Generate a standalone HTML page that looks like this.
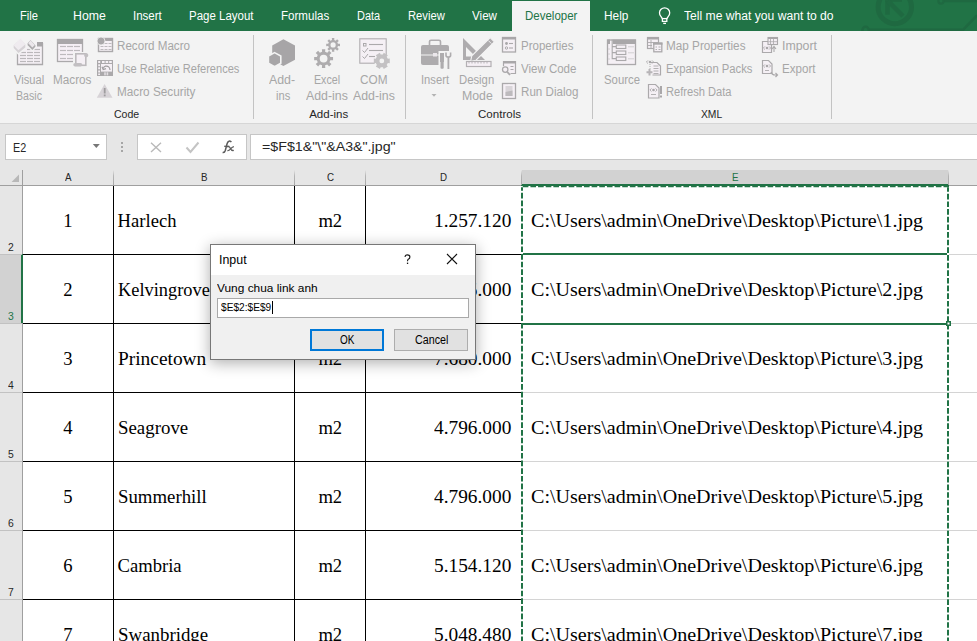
<!DOCTYPE html>
<html><head><meta charset="utf-8"><title>Excel</title><style>
html,body{margin:0;padding:0}
body{width:977px;height:641px;overflow:hidden;background:#ffffff;position:relative}
.a{position:absolute;display:block}
.t{position:absolute;white-space:pre;line-height:normal;transform-origin:0 0}
</style></head><body>
<div class="a" style="left:0;top:0;width:977px;height:31px;background:#217346"></div>

<svg class="a" style="left:0;top:0" width="977" height="31" viewBox="0 0 977 31">
 <g fill="none" stroke="#1f6941">
  <circle cx="894.8" cy="7" r="16.7" stroke-width="5"/>
  <path d="M887.5,-2 V14.7" stroke-width="4.5"/>
  <path d="M885,-0.5 H902" stroke-width="4.5"/>
  <path d="M888,1 L903,16" stroke-width="4.5"/>
  <path d="M869,29.8 H963 L977,15.5" stroke-width="2.6"/>
  <circle cx="865.6" cy="30" r="3.2" stroke-width="2.4"/>
  <path d="M944,1 H977" stroke-width="2.6"/>
  <circle cx="941" cy="1" r="2.6" stroke-width="2.2"/>
 </g>
 <g fill="none" stroke="#ffffff" stroke-width="1.3">
  <path d="M662.4,18.6 L660.9,16.4 A5.1,5.1 0 1 1 668.3,16.4 L666.8,18.6"/>
  <rect x="662.4" y="18.6" width="4.4" height="2.8"/>
  <path d="M663.2,23.4 H666"/>
 </g>
</svg>
<div class="a" style="left:512px;top:1px;width:78px;height:30px;background:#f3f3f3"></div>
<div class="a" style="left:0;top:31px;width:977px;height:92px;background:#f3f3f3"></div>
<div class="a" style="left:0;top:123px;width:977px;height:1px;background:#d6d6d6"></div>
<div class="a" style="left:0;top:124px;width:977px;height:62px;background:#e6e6e6"></div>
<!-- formula bar -->
<div class="a" style="left:5px;top:134px;width:100px;height:24px;background:#fff;border:1px solid #c6c6c6"></div>
<svg class="a" style="left:0;top:120px" width="260" height="50" viewBox="0 120 260 50">
 <polygon points="92.8,144 99.8,144 96.3,148" fill="#777"/>
 <rect x="121" y="142" width="2" height="2" fill="#a6a6a6"/>
 <rect x="121" y="146" width="2" height="2" fill="#a6a6a6"/>
 <rect x="121" y="150" width="2" height="2" fill="#a6a6a6"/>
</svg>
<div class="a" style="left:137px;top:134px;width:108px;height:24px;background:#fff;border:1px solid #c6c6c6"></div>
<div class="a" style="left:250px;top:134px;width:740px;height:24px;background:#fff;border:1px solid #c6c6c6"></div>
<svg class="a" style="left:0;top:120px" width="260" height="50" viewBox="0 120 260 50">
 <path d="M151,142.8 L161,152 M161,142.8 L151,152" stroke="#b9b9b9" stroke-width="1.4"/>
 <path d="M186.5,147.5 L190.5,152 L198.5,142.5" fill="none" stroke="#c4c4c4" stroke-width="2"/>
</svg>
<svg class="a" style="left:215px;top:136px" width="25" height="20" viewBox="215 136 25 20">
 <path d="M231.3,142.2 Q230.6,140.8 229,141.2 Q227.6,141.6 227,144 L225.3,150.5 Q224.6,152.8 222.6,152.4" fill="none" stroke="#5c5c5c" stroke-width="1.5"/>
 <path d="M224.2,146.3 H229.3" stroke="#5c5c5c" stroke-width="1.3"/>
 <path d="M227.2,147 Q229.2,146 230.3,148.2 Q231.6,151 233.8,150.4 M233.9,146.6 Q232.5,146.8 230.6,148.8 Q228.8,150.9 227.4,150.6" fill="none" stroke="#5c5c5c" stroke-width="1.3"/>
</svg>
<!-- header -->
<div class="a" style="left:521px;top:170px;width:427px;height:15px;background:#d2d2d2"></div>
<div class="a" style="left:0;top:185px;width:977px;height:1px;background:#9f9f9f"></div>
<div class="a" style="left:521px;top:184px;width:428px;height:2px;background:#217346"></div>
<div class="a" style="left:0;top:186px;width:22px;height:455px;background:#e6e6e6"></div>
<div class="a" style="left:0;top:254px;width:22px;height:69px;background:#d2d2d2"></div>
<div class="a" style="left:22px;top:170px;width:1px;height:471px;background:#9f9f9f"></div>
<div class="a" style="left:21px;top:254px;width:2px;height:69px;background:#217346"></div>
<div class="a" style="left:113px;top:170px;width:1px;height:15px;background:linear-gradient(#e6e6e6,#b4b4b4 40%,#a8a8a8)"></div>
<div class="a" style="left:294px;top:170px;width:1px;height:15px;background:linear-gradient(#e6e6e6,#b4b4b4 40%,#a8a8a8)"></div>
<div class="a" style="left:365px;top:170px;width:1px;height:15px;background:linear-gradient(#e6e6e6,#b4b4b4 40%,#a8a8a8)"></div>
<div class="a" style="left:521px;top:170px;width:1px;height:15px;background:linear-gradient(#e6e6e6,#b4b4b4 40%,#a8a8a8)"></div>
<div class="a" style="left:948px;top:170px;width:1px;height:15px;background:linear-gradient(#e6e6e6,#b4b4b4 40%,#a8a8a8)"></div>
<div class="a" style="left:0;top:254px;width:22px;height:1px;background:#c2c2c2"></div>
<div class="a" style="left:0;top:323px;width:22px;height:1px;background:#c2c2c2"></div>
<div class="a" style="left:0;top:392px;width:22px;height:1px;background:#c2c2c2"></div>
<div class="a" style="left:0;top:461px;width:22px;height:1px;background:#c2c2c2"></div>
<div class="a" style="left:0;top:530px;width:22px;height:1px;background:#c2c2c2"></div>
<div class="a" style="left:0;top:599px;width:22px;height:1px;background:#c2c2c2"></div>
<svg class="a" style="left:0;top:170px" width="22" height="16" viewBox="0 170 22 16"><polygon points="19,174.4 19,182 11.6,182" fill="#b8b8b8"/></svg>
<div class="a" style="left:521px;top:254px;width:456px;height:1px;background:#d4d4d4"></div>
<div class="a" style="left:521px;top:323px;width:456px;height:1px;background:#d4d4d4"></div>
<div class="a" style="left:521px;top:392px;width:456px;height:1px;background:#d4d4d4"></div>
<div class="a" style="left:521px;top:461px;width:456px;height:1px;background:#d4d4d4"></div>
<div class="a" style="left:521px;top:530px;width:456px;height:1px;background:#d4d4d4"></div>
<div class="a" style="left:521px;top:599px;width:456px;height:1px;background:#d4d4d4"></div>
<div class="a" style="left:948px;top:186px;width:1px;height:455px;background:#d4d4d4"></div>
<div class="a" style="left:113px;top:186px;width:1px;height:455px;background:#000"></div>
<div class="a" style="left:294px;top:186px;width:1px;height:455px;background:#000"></div>
<div class="a" style="left:365px;top:186px;width:1px;height:455px;background:#000"></div>
<div class="a" style="left:23px;top:254px;width:498px;height:1px;background:#000"></div>
<div class="a" style="left:23px;top:323px;width:498px;height:1px;background:#000"></div>
<div class="a" style="left:23px;top:392px;width:498px;height:1px;background:#000"></div>
<div class="a" style="left:23px;top:461px;width:498px;height:1px;background:#000"></div>
<div class="a" style="left:23px;top:530px;width:498px;height:1px;background:#000"></div>
<div class="a" style="left:23px;top:599px;width:498px;height:1px;background:#000"></div>
<span class="t" style="left:20.20px;top:8.50px;font-family:'Liberation Sans';font-size:12.5px;color:#ffffff;transform:scaleX(0.8930);">File</span>
<span class="t" style="left:73.40px;top:8.50px;font-family:'Liberation Sans';font-size:12.5px;color:#ffffff;transform:scaleX(0.9837);">Home</span>
<span class="t" style="left:133.20px;top:8.50px;font-family:'Liberation Sans';font-size:12.5px;color:#ffffff;transform:scaleX(0.9211);">Insert</span>
<span class="t" style="left:189.30px;top:8.50px;font-family:'Liberation Sans';font-size:12.5px;color:#ffffff;transform:scaleX(0.9188);">Page Layout</span>
<span class="t" style="left:281.40px;top:8.50px;font-family:'Liberation Sans';font-size:12.5px;color:#ffffff;transform:scaleX(0.9253);">Formulas</span>
<span class="t" style="left:357.20px;top:8.50px;font-family:'Liberation Sans';font-size:12.5px;color:#ffffff;transform:scaleX(0.8748);">Data</span>
<span class="t" style="left:407.90px;top:8.50px;font-family:'Liberation Sans';font-size:12.5px;color:#ffffff;transform:scaleX(0.8976);">Review</span>
<span class="t" style="left:472.00px;top:8.50px;font-family:'Liberation Sans';font-size:12.5px;color:#ffffff;transform:scaleX(0.9302);">View</span>
<span class="t" style="left:524.60px;top:8.50px;font-family:'Liberation Sans';font-size:12.5px;color:#217346;transform:scaleX(0.9196);">Developer</span>
<span class="t" style="left:604.40px;top:8.50px;font-family:'Liberation Sans';font-size:12.5px;color:#ffffff;transform:scaleX(0.9487);">Help</span>
<span class="t" style="left:684.40px;top:8.50px;font-family:'Liberation Sans';font-size:12.5px;color:#ffffff;transform:scaleX(0.9699);">Tell me what you want to do</span>
<span class="t" style="left:13.50px;top:72.50px;font-family:'Liberation Sans';font-size:12.5px;color:#a6a6a6;transform:scaleX(0.8927);">Visual</span>
<span class="t" style="left:15.60px;top:88.50px;font-family:'Liberation Sans';font-size:12.5px;color:#a6a6a6;transform:scaleX(0.8503);">Basic</span>
<span class="t" style="left:52.50px;top:72.50px;font-family:'Liberation Sans';font-size:12.5px;color:#a6a6a6;transform:scaleX(0.9394);">Macros</span>
<span class="t" style="left:116.60px;top:38.50px;font-family:'Liberation Sans';font-size:12.5px;color:#a6a6a6;transform:scaleX(0.9299);">Record Macro</span>
<span class="t" style="left:116.60px;top:61.50px;font-family:'Liberation Sans';font-size:12.5px;color:#a6a6a6;transform:scaleX(0.8853);">Use Relative References</span>
<span class="t" style="left:116.60px;top:84.50px;font-family:'Liberation Sans';font-size:12.5px;color:#a6a6a6;transform:scaleX(0.9405);">Macro Security</span>
<span class="t" style="left:113.80px;top:108.42px;font-family:'Liberation Sans';font-size:11.5px;color:#262626;transform:scaleX(0.9164);">Code</span>
<span class="t" style="left:269.20px;top:72.50px;font-family:'Liberation Sans';font-size:12.5px;color:#a6a6a6;transform:scaleX(0.9884);">Add-</span>
<span class="t" style="left:275.70px;top:88.50px;font-family:'Liberation Sans';font-size:12.5px;color:#a6a6a6;transform:scaleX(0.8884);">ins</span>
<span class="t" style="left:314.40px;top:72.50px;font-family:'Liberation Sans';font-size:12.5px;color:#a6a6a6;transform:scaleX(0.8536);">Excel</span>
<span class="t" style="left:306.00px;top:88.50px;font-family:'Liberation Sans';font-size:12.5px;color:#a6a6a6;transform:scaleX(0.9861);">Add-ins</span>
<span class="t" style="left:360.00px;top:72.50px;font-family:'Liberation Sans';font-size:12.5px;color:#a6a6a6;transform:scaleX(0.9427);">COM</span>
<span class="t" style="left:353.00px;top:88.50px;font-family:'Liberation Sans';font-size:12.5px;color:#a6a6a6;transform:scaleX(0.9861);">Add-ins</span>
<span class="t" style="left:309.20px;top:108.42px;font-family:'Liberation Sans';font-size:11.5px;color:#262626;">Add-ins</span>
<span class="t" style="left:420.60px;top:72.50px;font-family:'Liberation Sans';font-size:12.5px;color:#a6a6a6;transform:scaleX(0.8956);">Insert</span>
<span class="t" style="left:459.40px;top:72.50px;font-family:'Liberation Sans';font-size:12.5px;color:#a6a6a6;transform:scaleX(0.9044);">Design</span>
<span class="t" style="left:461.60px;top:88.50px;font-family:'Liberation Sans';font-size:12.5px;color:#a6a6a6;transform:scaleX(0.9846);">Mode</span>
<span class="t" style="left:520.60px;top:38.50px;font-family:'Liberation Sans';font-size:12.5px;color:#a6a6a6;transform:scaleX(0.9196);">Properties</span>
<span class="t" style="left:520.60px;top:61.50px;font-family:'Liberation Sans';font-size:12.5px;color:#a6a6a6;transform:scaleX(0.9197);">View Code</span>
<span class="t" style="left:520.60px;top:84.50px;font-family:'Liberation Sans';font-size:12.5px;color:#a6a6a6;transform:scaleX(0.9281);">Run Dialog</span>
<span class="t" style="left:477.60px;top:108.42px;font-family:'Liberation Sans';font-size:11.5px;color:#262626;transform:scaleX(1.0040);">Controls</span>
<span class="t" style="left:604.00px;top:72.50px;font-family:'Liberation Sans';font-size:12.5px;color:#a6a6a6;transform:scaleX(0.9089);">Source</span>
<span class="t" style="left:665.50px;top:38.50px;font-family:'Liberation Sans';font-size:12.5px;color:#a6a6a6;transform:scaleX(0.9379);">Map Properties</span>
<span class="t" style="left:665.50px;top:61.50px;font-family:'Liberation Sans';font-size:12.5px;color:#a6a6a6;transform:scaleX(0.9021);">Expansion Packs</span>
<span class="t" style="left:665.50px;top:84.50px;font-family:'Liberation Sans';font-size:12.5px;color:#a6a6a6;transform:scaleX(0.8893);">Refresh Data</span>
<span class="t" style="left:781.50px;top:38.50px;font-family:'Liberation Sans';font-size:12.5px;color:#a6a6a6;transform:scaleX(0.9877);">Import</span>
<span class="t" style="left:781.50px;top:61.50px;font-family:'Liberation Sans';font-size:12.5px;color:#a6a6a6;transform:scaleX(0.9269);">Export</span>
<span class="t" style="left:700.80px;top:108.42px;font-family:'Liberation Sans';font-size:11.5px;color:#262626;transform:scaleX(0.8962);">XML</span>
<span class="t" style="left:12.50px;top:140.96px;font-family:'Liberation Sans';font-size:12px;color:#262626;transform:scaleX(0.8987);">E2</span>
<span class="t" style="left:261.90px;top:139.04px;font-family:'Liberation Sans';font-size:13px;color:#262626;transform:scaleX(1.0935);">=$F$1&amp;&quot;\&quot;&amp;A3&amp;&quot;.jpg&quot;</span>
<span class="t" style="left:65.14px;top:171.42px;font-family:'Liberation Sans';font-size:11.5px;color:#262626;transform:scaleX(0.8500);">A</span>
<span class="t" style="left:201.14px;top:171.42px;font-family:'Liberation Sans';font-size:11.5px;color:#262626;transform:scaleX(0.8500);">B</span>
<span class="t" style="left:326.87px;top:171.42px;font-family:'Liberation Sans';font-size:11.5px;color:#262626;transform:scaleX(0.8500);">C</span>
<span class="t" style="left:439.97px;top:171.42px;font-family:'Liberation Sans';font-size:11.5px;color:#262626;transform:scaleX(0.8500);">D</span>
<span class="t" style="left:732.14px;top:171.42px;font-family:'Liberation Sans';font-size:11.5px;color:#217346;transform:scaleX(0.8500);">E</span>
<span class="t" style="left:8.22px;top:241.42px;font-family:'Liberation Sans';font-size:11.5px;color:#262626;transform:scaleX(0.9000);">2</span>
<span class="t" style="left:8.22px;top:310.42px;font-family:'Liberation Sans';font-size:11.5px;color:#217346;transform:scaleX(0.9000);">3</span>
<span class="t" style="left:8.22px;top:379.42px;font-family:'Liberation Sans';font-size:11.5px;color:#262626;transform:scaleX(0.9000);">4</span>
<span class="t" style="left:8.22px;top:448.42px;font-family:'Liberation Sans';font-size:11.5px;color:#262626;transform:scaleX(0.9000);">5</span>
<span class="t" style="left:8.22px;top:517.42px;font-family:'Liberation Sans';font-size:11.5px;color:#262626;transform:scaleX(0.9000);">6</span>
<span class="t" style="left:8.22px;top:586.42px;font-family:'Liberation Sans';font-size:11.5px;color:#262626;transform:scaleX(0.9000);">7</span>
<span class="t" style="left:63.35px;top:210.07px;font-family:'Liberation Serif';font-size:18.6px;color:#000;">1</span>
<span class="t" style="left:117.60px;top:210.07px;font-family:'Liberation Serif';font-size:18.6px;color:#000;">Harlech</span>
<span class="t" style="left:318.42px;top:210.07px;font-family:'Liberation Serif';font-size:18.6px;color:#000;">m2</span>
<span class="t" style="left:434.25px;top:210.07px;font-family:'Liberation Serif';font-size:18.6px;color:#000;transform:scaleX(1.0400);">1.257.120</span>
<span class="t" style="left:530.70px;top:210.07px;font-family:'Liberation Serif';font-size:18.6px;color:#000;transform:scaleX(1.0800);">C:\Users\admin\OneDrive\Desktop\Picture\1.jpg</span>
<span class="t" style="left:63.35px;top:279.07px;font-family:'Liberation Serif';font-size:18.6px;color:#000;">2</span>
<span class="t" style="left:117.60px;top:279.07px;font-family:'Liberation Serif';font-size:18.6px;color:#000;transform:scaleX(0.9876);">Kelvingrove</span>
<span class="t" style="left:318.42px;top:279.07px;font-family:'Liberation Serif';font-size:18.6px;color:#000;">m2</span>
<span class="t" style="left:434.25px;top:279.07px;font-family:'Liberation Serif';font-size:18.6px;color:#000;transform:scaleX(1.0400);">1.365.000</span>
<span class="t" style="left:530.70px;top:279.07px;font-family:'Liberation Serif';font-size:18.6px;color:#000;transform:scaleX(1.0800);">C:\Users\admin\OneDrive\Desktop\Picture\2.jpg</span>
<span class="t" style="left:63.35px;top:348.07px;font-family:'Liberation Serif';font-size:18.6px;color:#000;">3</span>
<span class="t" style="left:117.60px;top:348.07px;font-family:'Liberation Serif';font-size:18.6px;color:#000;transform:scaleX(1.0425);">Princetown</span>
<span class="t" style="left:318.42px;top:348.07px;font-family:'Liberation Serif';font-size:18.6px;color:#000;">m2</span>
<span class="t" style="left:434.25px;top:348.07px;font-family:'Liberation Serif';font-size:18.6px;color:#000;transform:scaleX(1.0400);">7.680.000</span>
<span class="t" style="left:530.70px;top:348.07px;font-family:'Liberation Serif';font-size:18.6px;color:#000;transform:scaleX(1.0800);">C:\Users\admin\OneDrive\Desktop\Picture\3.jpg</span>
<span class="t" style="left:63.35px;top:417.07px;font-family:'Liberation Serif';font-size:18.6px;color:#000;">4</span>
<span class="t" style="left:117.60px;top:417.07px;font-family:'Liberation Serif';font-size:18.6px;color:#000;transform:scaleX(1.0146);">Seagrove</span>
<span class="t" style="left:318.42px;top:417.07px;font-family:'Liberation Serif';font-size:18.6px;color:#000;">m2</span>
<span class="t" style="left:434.25px;top:417.07px;font-family:'Liberation Serif';font-size:18.6px;color:#000;transform:scaleX(1.0400);">4.796.000</span>
<span class="t" style="left:530.70px;top:417.07px;font-family:'Liberation Serif';font-size:18.6px;color:#000;transform:scaleX(1.0800);">C:\Users\admin\OneDrive\Desktop\Picture\4.jpg</span>
<span class="t" style="left:63.35px;top:486.07px;font-family:'Liberation Serif';font-size:18.6px;color:#000;">5</span>
<span class="t" style="left:117.60px;top:486.07px;font-family:'Liberation Serif';font-size:18.6px;color:#000;transform:scaleX(1.0101);">Summerhill</span>
<span class="t" style="left:318.42px;top:486.07px;font-family:'Liberation Serif';font-size:18.6px;color:#000;">m2</span>
<span class="t" style="left:434.25px;top:486.07px;font-family:'Liberation Serif';font-size:18.6px;color:#000;transform:scaleX(1.0400);">4.796.000</span>
<span class="t" style="left:530.70px;top:486.07px;font-family:'Liberation Serif';font-size:18.6px;color:#000;transform:scaleX(1.0800);">C:\Users\admin\OneDrive\Desktop\Picture\5.jpg</span>
<span class="t" style="left:63.35px;top:555.07px;font-family:'Liberation Serif';font-size:18.6px;color:#000;">6</span>
<span class="t" style="left:117.60px;top:555.07px;font-family:'Liberation Serif';font-size:18.6px;color:#000;">Cambria</span>
<span class="t" style="left:318.42px;top:555.07px;font-family:'Liberation Serif';font-size:18.6px;color:#000;">m2</span>
<span class="t" style="left:434.25px;top:555.07px;font-family:'Liberation Serif';font-size:18.6px;color:#000;transform:scaleX(1.0400);">5.154.120</span>
<span class="t" style="left:530.70px;top:555.07px;font-family:'Liberation Serif';font-size:18.6px;color:#000;transform:scaleX(1.0800);">C:\Users\admin\OneDrive\Desktop\Picture\6.jpg</span>
<span class="t" style="left:63.35px;top:624.07px;font-family:'Liberation Serif';font-size:18.6px;color:#000;">7</span>
<span class="t" style="left:117.60px;top:624.07px;font-family:'Liberation Serif';font-size:18.6px;color:#000;transform:scaleX(1.0154);">Swanbridge</span>
<span class="t" style="left:318.42px;top:624.07px;font-family:'Liberation Serif';font-size:18.6px;color:#000;">m2</span>
<span class="t" style="left:434.25px;top:624.07px;font-family:'Liberation Serif';font-size:18.6px;color:#000;transform:scaleX(1.0400);">5.048.480</span>
<span class="t" style="left:530.70px;top:624.07px;font-family:'Liberation Serif';font-size:18.6px;color:#000;transform:scaleX(1.0800);">C:\Users\admin\OneDrive\Desktop\Picture\7.jpg</span>

<div class="a" style="left:521px;top:253px;width:428px;height:2px;background:#217346"></div>
<div class="a" style="left:521px;top:323px;width:428px;height:2px;background:#217346"></div>
<svg class="a" style="left:0;top:0" width="977" height="641" viewBox="0 0 977 641">
 <rect x="521" y="254" width="2" height="70" fill="#217346"/>
 <rect x="947" y="254" width="2" height="67" fill="#217346"/>
 <line x1="522" y1="186" x2="522" y2="641" stroke="#ffffff" stroke-width="2"/>
 <line x1="948" y1="186" x2="948" y2="641" stroke="#ffffff" stroke-width="2"/>
 <line x1="522" y1="185.2" x2="522" y2="641" stroke="#217346" stroke-width="2" stroke-dasharray="5.65 2"/>
 <line x1="948" y1="186.15" x2="948" y2="641" stroke="#217346" stroke-width="2" stroke-dasharray="5.65 2"/>
 <line x1="521" y1="186.6" x2="949" y2="186.6" stroke="#ffffff" stroke-width="1.2"/>
 <line x1="521" y1="186.6" x2="949" y2="186.6" stroke="#217346" stroke-width="1.2" stroke-dasharray="5.65 2" stroke-dashoffset="5.9"/>
 <rect x="946" y="321" width="5" height="5" fill="#217346"/>
 <rect x="947.5" y="322.5" width="2" height="2" fill="#ffffff"/>
</svg>

<svg class="a" style="left:0;top:0" width="977" height="170" viewBox="0 0 977 170">
 <!-- Visual Basic -->
 <rect x="17.5" y="42.5" width="25" height="22" fill="#f5f0f5"/>
 <path d="M17.5,47 V64.5 H42.5 V43" fill="none" stroke="#aba9ab" stroke-width="1.3"/>
 <rect x="37" y="42" width="6" height="4.5" fill="#a9a7a9"/>
 <line x1="20" y1="52.5" x2="26" y2="52.5" stroke="#bbb8bb" stroke-width="1.2"/><line x1="27" y1="52.5" x2="33" y2="52.5" stroke="#bbb8bb" stroke-width="1.2"/><line x1="34" y1="52.5" x2="40" y2="52.5" stroke="#bbb8bb" stroke-width="1.2"/><line x1="20" y1="55.5" x2="26" y2="55.5" stroke="#bbb8bb" stroke-width="1.2"/><line x1="27" y1="55.5" x2="33" y2="55.5" stroke="#bbb8bb" stroke-width="1.2"/><line x1="34" y1="55.5" x2="40" y2="55.5" stroke="#bbb8bb" stroke-width="1.2"/><line x1="20" y1="58.5" x2="26" y2="58.5" stroke="#bbb8bb" stroke-width="1.2"/><line x1="27" y1="58.5" x2="33" y2="58.5" stroke="#bbb8bb" stroke-width="1.2"/><line x1="34" y1="58.5" x2="40" y2="58.5" stroke="#bbb8bb" stroke-width="1.2"/><line x1="20" y1="61.5" x2="26" y2="61.5" stroke="#bbb8bb" stroke-width="1.2"/><line x1="27" y1="61.5" x2="33" y2="61.5" stroke="#bbb8bb" stroke-width="1.2"/><line x1="34" y1="61.5" x2="40" y2="61.5" stroke="#bbb8bb" stroke-width="1.2"/>
 <line x1="34" y1="49.5" x2="40" y2="49.5" stroke="#bbb8bb" stroke-width="1.2"/>
 <line x1="27" y1="49.5" x2="33" y2="49.5" stroke="#bbb8bb" stroke-width="1.2"/>
 <polygon points="20.6,38.2 26,44 26,47.8 18.4,54 13,48.2 13,45" fill="#d6d2d6" stroke="#f3f3f3" stroke-width="1.4"/>
 <polygon points="20.6,38.8 25.5,44.2 18.4,50.2 13.5,45.2" fill="#efebef"/>
 <polygon points="30.5,39.2 36,45 36,47 32.4,51 27,45.5 27,43" fill="#aeacae" stroke="#f3f3f3" stroke-width="1.2"/>
 <polygon points="30.5,40.2 34.8,45 32.4,47.6 28.2,43.2" fill="#ebe7eb"/>
 <!-- Macros -->
 <rect x="57.5" y="39.5" width="25" height="22" fill="#f5f0f5" stroke="#aba9ab" stroke-width="1.3"/>
 <rect x="57" y="39" width="26" height="5" fill="#a9a7a9"/>
 <line x1="60" y1="46.5" x2="66" y2="46.5" stroke="#bdbabd" stroke-width="1.2"/><line x1="67" y1="46.5" x2="73" y2="46.5" stroke="#bdbabd" stroke-width="1.2"/><line x1="74" y1="46.5" x2="80" y2="46.5" stroke="#bdbabd" stroke-width="1.2"/><line x1="60" y1="50.5" x2="66" y2="50.5" stroke="#bdbabd" stroke-width="1.2"/><line x1="67" y1="50.5" x2="73" y2="50.5" stroke="#bdbabd" stroke-width="1.2"/><line x1="74" y1="50.5" x2="80" y2="50.5" stroke="#bdbabd" stroke-width="1.2"/><line x1="60" y1="54.5" x2="66" y2="54.5" stroke="#bdbabd" stroke-width="1.2"/><line x1="67" y1="54.5" x2="73" y2="54.5" stroke="#bdbabd" stroke-width="1.2"/><line x1="74" y1="54.5" x2="80" y2="54.5" stroke="#bdbabd" stroke-width="1.2"/><line x1="60" y1="58.5" x2="66" y2="58.5" stroke="#bdbabd" stroke-width="1.2"/><line x1="67" y1="58.5" x2="73" y2="58.5" stroke="#bdbabd" stroke-width="1.2"/><line x1="74" y1="58.5" x2="80" y2="58.5" stroke="#bdbabd" stroke-width="1.2"/>
 <rect x="73" y="52" width="16" height="16" fill="#f3f3f3"/>
 <rect x="75.8" y="53.8" width="10" height="11.5" fill="#f5f0f5" stroke="#bdbabd" stroke-width="1.6"/>
 <rect x="84.2" y="53.2" width="4" height="4" rx="1.6" fill="#c2bfc2"/>
 <rect x="73.3" y="63" width="9" height="3.6" rx="1.8" fill="#c2bfc2"/>
 <!-- Record Macro -->
 <rect x="98.5" y="38.5" width="14" height="13" fill="#f5f0f5" stroke="#aba9ab" stroke-width="1.4"/>
 <rect x="104" y="38" width="9" height="3" fill="#a9a7a9"/>
 <line x1="100.5" y1="43.5" x2="103.5" y2="43.5" stroke="#bdbabd" stroke-width="1"/><line x1="104.5" y1="43.5" x2="107.5" y2="43.5" stroke="#bdbabd" stroke-width="1"/><line x1="108.5" y1="43.5" x2="111.5" y2="43.5" stroke="#bdbabd" stroke-width="1"/><line x1="100.5" y1="46.5" x2="103.5" y2="46.5" stroke="#bdbabd" stroke-width="1"/><line x1="104.5" y1="46.5" x2="107.5" y2="46.5" stroke="#bdbabd" stroke-width="1"/><line x1="108.5" y1="46.5" x2="111.5" y2="46.5" stroke="#bdbabd" stroke-width="1"/><line x1="100.5" y1="49.5" x2="103.5" y2="49.5" stroke="#bdbabd" stroke-width="1"/><line x1="104.5" y1="49.5" x2="107.5" y2="49.5" stroke="#bdbabd" stroke-width="1"/><line x1="108.5" y1="49.5" x2="111.5" y2="49.5" stroke="#bdbabd" stroke-width="1"/>
 <circle cx="101" cy="41" r="4" fill="#a9a7a9" stroke="#f3f3f3" stroke-width="0.8"/>
 <!-- Use Relative References -->
 <rect x="97" y="60" width="16" height="16" fill="#aba9ab"/>
 <rect x="101" y="64" width="11" height="7.6" fill="#f5f0f5"/>
 <path d="M98.2,61.1 h2 v1.9 h-2z M102,61.1 h2.6 v1.9 h-2.6z M105.6,61.1 h2.6 v1.9 h-2.6z M109.2,61.1 h2.6 v1.9 h-2.6z" fill="#f5f1f5"/>
 <path d="M98.2,64.2 h1.8 v2 h-1.8z M98.2,67.3 h1.8 v2 h-1.8z M98.2,70.4 h1.8 v2 h-1.8z M98.2,73.5 h1.8 v1.6 h-1.8z" fill="#f5f1f5"/>
 <path d="M104.2,72.6 h1.6 v1.2 h-1.6z M106.6,72.6 h1.6 v1.2 h-1.6z M104.2,74.2 h1.6 v1 h-1.6z M106.6,74.2 h1.6 v1 h-1.6z" fill="#f5f1f5"/>
 <path d="M110,70 Q109.6,65.6 105.5,66.2 Q103.8,66.6 103.3,68.4" fill="none" stroke="#9f9d9f" stroke-width="1.2"/>
 <path d="M102,66.8 L103.2,69.6 L106,68.6" fill="none" stroke="#9f9d9f" stroke-width="1.2"/>
 <!-- Macro Security -->
 <polygon points="104.6,84 112.5,97.8 96.8,97.8" fill="#d7d3d7"/>
 <rect x="103.8" y="88" width="1.8" height="5.5" fill="#9f9d9f"/>
 <rect x="103.8" y="94.5" width="1.8" height="1.8" fill="#9f9d9f"/>
 <!-- separators -->
 <rect x="253" y="35" width="1" height="84" fill="#c3c3c3"/>
 <rect x="405" y="35" width="1" height="84" fill="#c3c3c3"/>
 <rect x="592" y="35" width="1" height="84" fill="#c3c3c3"/>
 <rect x="831" y="35" width="1" height="84" fill="#c3c3c3"/>
 <!-- Add-ins hexagon -->
 <polygon points="283.4,39.3 295,45.5 295,59.8 283.4,66 272.2,59.8 272.2,45.5" fill="#a7a5a7"/>
 <polygon points="274.6,52.6 280.8,56 280.8,63.2 274.6,66.6 268.4,63.2 268.4,56" fill="#a7a5a7" stroke="#f3f3f3" stroke-width="1.6"/>
 <!-- Excel add-ins gears -->
 <path d="M322.07,51.87 L321.91,49.15 L325.29,49.15 L325.13,51.87 L327.27,52.76 L329.09,50.72 L331.48,53.11 L329.44,54.93 L330.33,57.07 L333.05,56.91 L333.05,60.29 L330.33,60.13 L329.44,62.27 L331.48,64.09 L329.09,66.48 L327.27,64.44 L325.13,65.33 L325.29,68.05 L321.91,68.05 L322.07,65.33 L319.93,64.44 L318.11,66.48 L315.72,64.09 L317.76,62.27 L316.87,60.13 L314.15,60.29 L314.15,56.91 L316.87,57.07 L317.76,54.93 L315.72,53.11 L318.11,50.72 L319.93,52.76Z M327.50,58.60 A3.9,3.9 0 1 0 319.70,58.60 A3.9,3.9 0 1 0 327.50,58.60Z" fill="#aeacae" fill-rule="evenodd"/>
 <path d="M331.99,40.02 L331.87,38.01 L334.33,38.01 L334.21,40.02 L335.76,40.67 L337.10,39.16 L338.84,40.90 L337.33,42.24 L337.98,43.79 L339.99,43.67 L339.99,46.13 L337.98,46.01 L337.33,47.56 L338.84,48.90 L337.10,50.64 L335.76,49.13 L334.21,49.78 L334.33,51.79 L331.87,51.79 L331.99,49.78 L330.44,49.13 L329.10,50.64 L327.36,48.90 L328.87,47.56 L328.22,46.01 L326.21,46.13 L326.21,43.67 L328.22,43.79 L328.87,42.24 L327.36,40.90 L329.10,39.16 L330.44,40.67Z M335.70,44.90 A2.6,2.6 0 1 0 330.50,44.90 A2.6,2.6 0 1 0 335.70,44.90Z" fill="#aeacae" fill-rule="evenodd"/>
 <!-- COM add-ins -->
 <rect x="359.8" y="38.8" width="26.4" height="24.4" fill="#f5f0f5" stroke="#b0adb0" stroke-width="1.1"/>
 <rect x="363.5" y="43.5" width="2.5" height="2.5" fill="none" stroke="#aba9ab" stroke-width="1"/>
 <line x1="369" y1="44.5" x2="383" y2="44.5" stroke="#aba9ab" stroke-width="1.1"/>
 <line x1="369" y1="50.5" x2="383" y2="50.5" stroke="#aba9ab" stroke-width="1.1"/>
 <line x1="369" y1="56.5" x2="375" y2="56.5" stroke="#aba9ab" stroke-width="1.1"/>
 <path d="M362.5,50.5 L364.5,52.5 L368,48 M362.5,56.5 L364.5,58.5 L368,54" fill="none" stroke="#aba9ab" stroke-width="1"/>
 <circle cx="381.8" cy="60.9" r="7.6" fill="#f3f3f3"/>
 <path d="M387.81,58.70 L389.76,58.54 L389.76,63.26 L387.81,63.10 L386.71,65.01 L387.82,66.61 L383.74,68.97 L382.90,67.20 L380.70,67.20 L379.86,68.97 L375.78,66.61 L376.89,65.01 L375.79,63.10 L373.84,63.26 L373.84,58.54 L375.79,58.70 L376.89,56.79 L375.78,55.19 L379.86,52.83 L380.70,54.60 L382.90,54.60 L383.74,52.83 L387.82,55.19 L386.71,56.79Z M384.20,60.90 A2.4,2.4 0 1 0 379.40,60.90 A2.4,2.4 0 1 0 384.20,60.90Z" fill="#c3c1c3" fill-rule="evenodd"/>
 <!-- Insert briefcase -->
 <rect x="421" y="45" width="28" height="20" rx="2" fill="#aeacae"/>
 <path d="M429.5,45 V41.5 Q429.5,40.3 431,40.3 H439 Q440.5,40.3 440.5,41.5 V45" fill="none" stroke="#aeacae" stroke-width="1.6"/>
 <line x1="421" y1="55" x2="439" y2="55" stroke="#f3f3f3" stroke-width="1"/>
 <rect x="433" y="53" width="4" height="3.5" fill="#ebe7eb"/>
 <rect x="438.5" y="51" width="14" height="19" fill="#f3f3f3"/>
 <rect x="440" y="53" width="4" height="9" fill="#aeacae"/>
 <rect x="440.5" y="61" width="3.2" height="7.8" rx="1" fill="#aeacae"/>
 <path d="M446,52.5 V55.5 Q446,57 448.3,57 Q450.6,57 450.6,55.5 V52.5" fill="none" stroke="#aeacae" stroke-width="1.6"/>
 <rect x="447.5" y="57" width="1.8" height="12" fill="#aeacae"/>
 <!-- Design Mode -->
 <path d="M463,38 L485,60 L463,60 Z M466,47 L466,56.5 L475.5,56.5 Z" fill="#aeacae" fill-rule="evenodd"/>
 <path d="M490.2,37.6 L494.4,41.8 L476,60.2 L470.6,61.2 L471.8,55.8 Z" fill="#aeacae" stroke="#f3f3f3" stroke-width="1.1"/>
 <path d="M488.4,40.6 L491.4,43.6" stroke="#f3f3f3" stroke-width="0.9"/>
 <rect x="466.5" y="61.5" width="24.5" height="5" fill="#f5f0f5" stroke="#b3b0b3" stroke-width="1.2"/>
 <path d="M469,61.5 v2 M472,61.5 v2 M475,61.5 v2 M478,61.5 v2 M481,61.5 v2 M484,61.5 v2 M487,61.5 v2" stroke="#b3b0b3" stroke-width="0.9"/>
 <!-- Insert dropdown arrow -->
 <polygon points="431.5,94 436.5,94 434,96.8" fill="#b3b3b3"/>
 <!-- Properties -->
 <rect x="502.5" y="37.5" width="13" height="14.5" fill="#f5f0f5" stroke="#aba9ab" stroke-width="1.3"/>
 <rect x="502" y="37" width="14" height="2.5" fill="#a9a7a9"/>
 <circle cx="506.5" cy="43.5" r="1.4" fill="#a9a7a9"/>
 <circle cx="506.5" cy="48" r="1.2" fill="none" stroke="#aba9ab" stroke-width="1"/>
 <line x1="509" y1="43.5" x2="513" y2="43.5" stroke="#aba9ab" stroke-width="1.1"/>
 <line x1="509" y1="48" x2="513" y2="48" stroke="#aba9ab" stroke-width="1.1"/>
 <!-- View Code -->
 <path d="M503.5,66 V61.5 H515.5 V73.5 H510.5" fill="#f5f0f5" stroke="#aba9ab" stroke-width="1.2"/>
 <rect x="503" y="61" width="13" height="2.5" fill="#a9a7a9"/>
 <line x1="510.5" y1="66.5" x2="513.5" y2="66.5" stroke="#aba9ab" stroke-width="1"/>
 <line x1="510.5" y1="69.5" x2="513.5" y2="69.5" stroke="#aba9ab" stroke-width="1"/>
 <circle cx="505.2" cy="69.6" r="3.6" fill="#f3f3f3"/>
 <circle cx="505.2" cy="69.6" r="2.7" fill="#f5f0f5" stroke="#aba9ab" stroke-width="1.3"/>
 <line x1="507.2" y1="71.8" x2="510" y2="75" stroke="#aba9ab" stroke-width="1.8"/>
 <!-- Run Dialog -->
 <rect x="502.5" y="83.5" width="13" height="15" fill="#f5f0f5" stroke="#aba9ab" stroke-width="1.3"/>
 <path d="M505.5,86 H512.5 V96 H505.5 Z" fill="#d9d5d9"/>
 <path d="M505.5,92 L512.5,90.5 V96 H505.5 Z" fill="#bdbabd"/>
 <rect x="508.5" y="84" width="1" height="1.2" fill="#f3f3f3"/>
 <!-- Source -->
 <rect x="607.5" y="40" width="28" height="24.5" fill="#f5f0f5" stroke="#aba9ab" stroke-width="1.3"/>
 <rect x="613" y="39.5" width="23" height="4.5" fill="#a9a7a9"/>
 <rect x="607.5" y="39.5" width="2.5" height="4.5" fill="#a9a7a9"/>
 <path d="M612.2,39.5 V58.6 H616 M612.2,46.6 H616 M612.2,52.6 H616" fill="none" stroke="#aba9ab" stroke-width="1.1"/>
 <rect x="616.3" y="45" width="9.5" height="3.5" fill="none" stroke="#aba9ab" stroke-width="1.1"/>
 <rect x="616.3" y="51" width="9.5" height="3.5" fill="none" stroke="#aba9ab" stroke-width="1.1"/>
 <rect x="616.3" y="57" width="9.5" height="3.5" fill="none" stroke="#aba9ab" stroke-width="1.1"/>
 <path d="M628,46.8 H634 M628,52.8 H634 M628,58.8 H634 M608,49 H610 M608,54 H610 M608,59 H610" stroke="#cfcccf" stroke-width="0.9"/>
 <!-- Map Properties -->
 <rect x="647.5" y="37.5" width="11" height="11" fill="#f5f0f5" stroke="#aba9ab" stroke-width="1.2"/>
 <rect x="647" y="37" width="12" height="2.5" fill="#a9a7a9"/>
 <path d="M648,42.5 H658 M648,45.5 H652 M651,40 V48" stroke="#aba9ab" stroke-width="0.9"/>
 <rect x="653.8" y="43.2" width="8" height="8.6" fill="#f5f0f5" stroke="#aba9ab" stroke-width="1.3"/>
 <rect x="653" y="42.5" width="9.5" height="2.2" fill="#a9a7a9"/>
 <path d="M655.5,47 h1.5 M658.5,47 h2 M655.5,49.5 h1.5 M658.5,49.5 h2" stroke="#aba9ab" stroke-width="0.9"/>
 <!-- Expansion Packs -->
 <path d="M651,62.5 H657 L660.5,66 V75 H652.5" fill="#f5f0f5" stroke="#aba9ab" stroke-width="1.2"/>
 <path d="M653.5,66 h5 M653.5,68.5 h5 M653.5,71 h5 M653.5,73.5 h5" stroke="#aba9ab" stroke-width="0.9"/>
 <path d="M648,60.4 L646.4,62 L648,63.6 M652,60.4 L653.6,62 L652,63.6" fill="none" stroke="#aba9ab" stroke-width="0.9"/><circle cx="650" cy="62" r="1.3" fill="#a9a7a9"/>
 <path d="M650,64 V69" stroke="#aba9ab" stroke-width="0.9" stroke-dasharray="1 1"/>
 <path d="M649.5,69 V75.5 M646.5,72.3 H652.5" stroke="#b7b4b7" stroke-width="2"/>
 <!-- Refresh Data -->
 <path d="M648.5,84.5 H655.5 L659,88 V98 H648.5 Z" fill="#f5f0f5" stroke="#aba9ab" stroke-width="1.2"/>
 <path d="M651.5,88.4 L649.9,90 L651.5,91.6 M655.5,88.4 L657.1,90 L655.5,91.6" fill="none" stroke="#aba9ab" stroke-width="0.9"/><circle cx="653.5" cy="90" r="1.3" fill="#a9a7a9"/>
 <path d="M651,94.5 h5" stroke="#aba9ab" stroke-width="0.9"/>
 <rect x="660" y="86" width="2" height="8" fill="#a9a7a9"/>
 <rect x="660" y="95.5" width="2" height="2" fill="#a9a7a9"/>
 <!-- Import -->
 <path d="M762.5,41.5 H768 L771.5,45 V52.5 H762.5 Z" fill="#f5f0f5" stroke="#aba9ab" stroke-width="1.2"/>
 <rect x="768" y="37.5" width="9.5" height="7" fill="#f5f0f5" stroke="#aba9ab" stroke-width="1.1"/>
 <rect x="768" y="37" width="10" height="2" fill="#a9a7a9"/>
 <path d="M770.5,39 V44.5 M773.5,39 V44.5 M768.5,41.7 H777.5" stroke="#aba9ab" stroke-width="0.8"/>
 <path d="M765,46.4 L763.4,48 L765,49.6 M769,46.4 L770.6,48 L769,49.6" fill="none" stroke="#aba9ab" stroke-width="0.9"/><circle cx="767" cy="48" r="1.3" fill="#a9a7a9"/>
 <path d="M774,52 V47 M772,49 L774,46.5 L776,49" fill="none" stroke="#aba9ab" stroke-width="1.1"/>
 <!-- Export -->
 <path d="M762.5,60.5 H768.5 L772,64 V73.5 H762.5 Z" fill="#f5f0f5" stroke="#aba9ab" stroke-width="1.2"/>
 <path d="M765,64.4 L763.4,66 L765,67.6 M769,64.4 L770.6,66 L769,67.6" fill="none" stroke="#aba9ab" stroke-width="0.9"/><circle cx="767" cy="66" r="1.3" fill="#a9a7a9"/>
 <path d="M765,70.5 h4" stroke="#aba9ab" stroke-width="0.9"/>
 <path d="M771,72 Q772,75 775,75 H777 M775.5,73 L777.5,75 L775.5,77" fill="none" stroke="#aba9ab" stroke-width="1.2"/>
</svg>
<div class="a" style="left:210px;top:244px;width:264px;height:114px;border:1px solid #777;background:#f0f0f0;box-shadow:0 3px 14px rgba(0,0,0,0.32)"></div>
<div class="a" style="left:211px;top:245px;width:264px;height:30px;background:#fff"></div>
<div class="a" style="left:217px;top:298px;width:250px;height:18px;border:1px solid #a9a9a9;background:#fff"></div>
<div class="a" style="left:272px;top:301px;width:1px;height:13px;background:#000"></div>
<div class="a" style="left:310px;top:329px;width:70px;height:18px;border:2px solid #0078d7;background:#e1e1e1"></div>
<div class="a" style="left:394px;top:329px;width:72px;height:20px;border:1px solid #adadad;background:#e1e1e1"></div>
<svg class="a" style="left:400px;top:250px" width="70" height="20" viewBox="400 250 70 20">
 <path d="M447,254 L457,264 M457,254 L447,264" stroke="#111" stroke-width="1.1"/>
</svg>
<svg class="a" style="left:400px;top:250px" width="15" height="18" viewBox="400 250 15 18">
 <path d="M405.1,257 Q405,254.8 407.5,254.8 Q409.9,254.8 409.9,256.9 Q409.9,258.4 408.3,259.3 Q407.5,259.8 407.5,261.3" fill="none" stroke="#1a1a1a" stroke-width="1.15"/>
 <rect x="406.9" y="262.6" width="1.3" height="1.4" fill="#1a1a1a"/>
</svg>
<span class="t" style="left:219.30px;top:252.96px;font-family:'Liberation Sans';font-size:12px;color:#000;transform:scaleX(1.0336);">Input</span>
<span class="t" style="left:216.90px;top:282.42px;font-family:'Liberation Sans';font-size:11.5px;color:#000;transform:scaleX(1.0338);">Vung chua link anh</span>
<span class="t" style="left:221.40px;top:301.42px;font-family:'Liberation Sans';font-size:11.5px;color:#000;transform:scaleX(0.8819);">$E$2:$E$9</span>
<span class="t" style="left:339.60px;top:332.96px;font-family:'Liberation Sans';font-size:12px;color:#000;transform:scaleX(0.8303);">OK</span>
<span class="t" style="left:414.50px;top:332.96px;font-family:'Liberation Sans';font-size:12px;color:#000;transform:scaleX(0.8940);">Cancel</span>
</body></html>
